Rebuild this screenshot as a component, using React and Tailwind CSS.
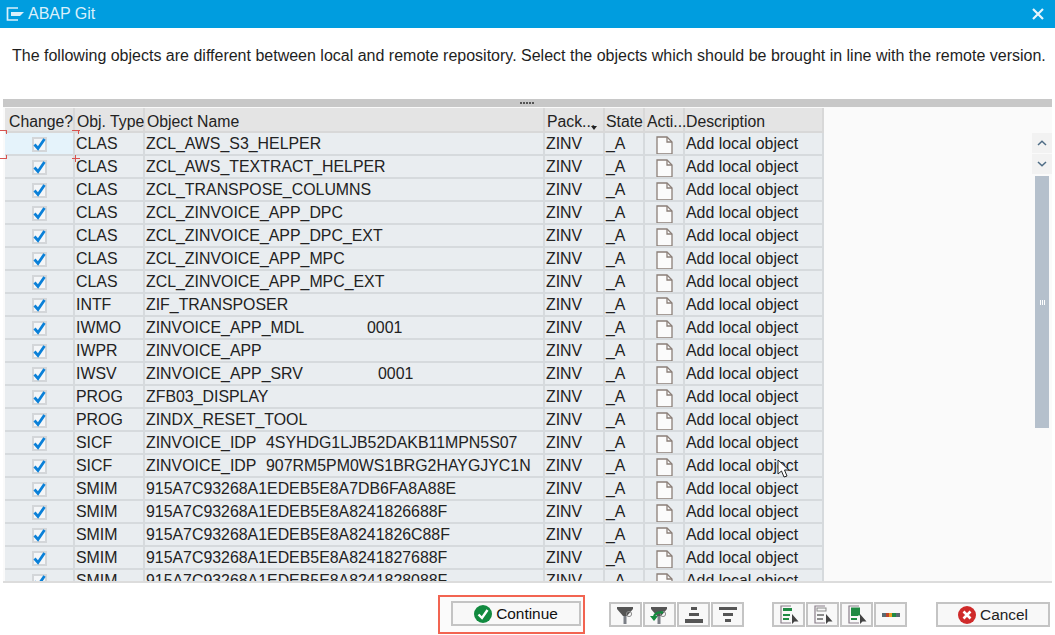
const rows = [
  ["CLAS", "ZCL_AWS_S3_HELPER"],
  ["CLAS", "ZCL_AWS_TEXTRACT_HELPER"],
  ["CLAS", "ZCL_TRANSPOSE_COLUMNS"],
  ["CLAS", "ZCL_ZINVOICE_APP_DPC"],
  ["CLAS", "ZCL_ZINVOICE_APP_DPC_EXT"],
  ["CLAS", "ZCL_ZINVOICE_APP_MPC"],
  ["CLAS", "ZCL_ZINVOICE_APP_MPC_EXT"],
  ["INTF", "ZIF_TRANSPOSER"],
  ["IWMO", "ZINVOICE_APP_MDL", "0001", "w-[221px]"],
  ["IWPR", "ZINVOICE_APP"],
  ["IWSV", "ZINVOICE_APP_SRV", "0001", "w-[232px]"],
  ["PROG", "ZFB03_DISPLAY"],
  ["PROG", "ZINDX_RESET_TOOL"],
  ["SICF", "ZINVOICE_IDP", "4SYHDG1LJB52DAKB11MPN5S07", "w-[120px]"],
  ["SICF", "ZINVOICE_IDP", "907RM5PM0WS1BRG2HAYGJYC1N", "w-[120px]"],
  ["SMIM", "915A7C93268A1EDEB5E8A7DB6FA8A88E"],
  ["SMIM", "915A7C93268A1EDEB5E8A8241826688F"],
  ["SMIM", "915A7C93268A1EDEB5E8A8241826C88F"],
  ["SMIM", "915A7C93268A1EDEB5E8A8241827688F"],
  ["SMIM", "915A7C93268A1EDEB5E8A8241828088F"],
];

const Check = () => (
  <span className="flex h-[15px] w-[15px] items-center justify-center bg-[#f4f6f8] border-2 border-[#d3d6d9]">
    <svg width="13" height="13" viewBox="0 0 13 13" className="shrink-0">
      <path d="M1.5 6.5 L5 10.5 L11.5 1" fill="none" stroke="#0a80d8" strokeWidth="2.8" />
    </svg>
  </span>
);

const Doc = () => (
  <svg width="17" height="19" viewBox="0 0 17 19">
    <path d="M1 1 H11 L16 6 V18 H1 Z" fill="#fbfbfb" stroke="#8b7f78" strokeWidth="1.3" />
    <path d="M11 1 V6 H16" fill="none" stroke="#8b7f78" strokeWidth="1.3" />
  </svg>
);

const cols = ["w-[70px]", "w-[70px]", "w-[400px]", "w-[60px]", "w-[40px]", "w-[40px]", "w-[139px]"];

const Head = ({ w, children, className = "" }) => (
  <div className={`${w} shrink-0 h-full border-r-2 border-[#d8d8d8] pt-[4px] leading-[20px] relative whitespace-nowrap ${className}`}>{children}</div>
);

const Cell = ({ w, children, className = "" }) => (
  <div className={`${w} shrink-0 border-r-2 border-[#d6dadd] pl-[1px] overflow-hidden whitespace-pre h-full ${className}`}>{children}</div>
);

const Row = ({ r, first }) => (
  <div className="flex h-[23px] shrink-0 border-b-2 border-[#d6dadd] bg-[#e9edf0] leading-[21px]">
    <div className={`w-[70px] shrink-0 border-r-2 border-[#d6dadd] flex justify-center pt-[4px] ${first ? "bg-[#e5f3fb]" : ""}`}><Check /></div>
    <Cell w="w-[70px]">{r[0]}</Cell>
    <Cell w="w-[400px]">
      {r[2] ? <span className="flex"><span className={`${r[3]} shrink-0`}>{r[1]}</span><span>{r[2]}</span></span> : r[1]}
    </Cell>
    <Cell w="w-[60px]">ZINV</Cell>
    <Cell w="w-[40px]">_A</Cell>
    <Cell w="w-[40px]" className="flex justify-center pt-[3px] pl-0"><Doc /></Cell>
    <Cell w="w-[139px]">Add local object</Cell>
  </div>
);

const Btn = ({ children, className = "" }) => (
  <button className={`flex h-[25px] items-center justify-center border-2 border-[#c4c4c4] bg-[#f8f8f8] text-[15.4px] ${className}`}>{children}</button>
);

const Funnel = () => (
  <>
    <path d="M2 2 H18 V4 L12 11 H8 L8 11 L2 4 Z" fill="#555" />
    <rect x="8.5" y="11" width="3" height="8" fill="#7b7f86" />
    <circle cx="14" cy="9" r="2.6" fill="none" stroke="#8a8a8a" strokeWidth="1" />
  </>
);

const Tool = ({ children }) => (
  <Btn className="w-[33px]">
    <svg width="22" height="20" viewBox="0 0 22 20">{children}</svg>
  </Btn>
);

const Sel = ({ color, solid }) => (
  <>
    <path d="M13 1 H3 V18 H13" fill="none" stroke="#8a7f8a" strokeWidth="1.2" />
    {solid ? (
      <rect x="5" y="2.5" width="9" height="8" fill={color} />
    ) : (
      <rect x="5" y="3" width="9" height="3" fill={color === "#8a8a8a" ? "none" : color} stroke={color === "#8a8a8a" ? color : "none"} />
    )}
    <rect x="5" y="9" width="7" height="2" fill={color} />
    <rect x="5" y="13" width="6" height="2" fill={color} />
    <path d="M14 9 L14 19 L16.5 16.5 H20.5 Z" fill="#444" />
  </>
);

const Corner = ({ className }) => <span className={`absolute bg-[#d9534f] ${className}`} />;

export default function App() {
  return (
    <div className="relative flex h-[635px] w-[1055px] flex-col overflow-hidden bg-white text-[15.9px] text-[#222] [font-family:'Liberation_Sans',Arial,sans-serif]">
      <div className="flex h-[28px] shrink-0 items-center justify-between bg-[#009ddf] pl-[6px] pr-[11px] text-[16px]">
        <div className="flex items-center gap-[3px]">
          <svg width="19" height="16" viewBox="0 0 19 16">
            <path d="M12 2 H1.5 V14 H12" fill="none" stroke="#d9f0fb" strokeWidth="1.7" />
            <path d="M5 6 H18 L14 10 H5 Z" fill="#d9f0fb" />
          </svg>
          <span className="text-[#d9f0fb]">ABAP Git</span>
        </div>
        <svg width="12" height="12" viewBox="0 0 12 12">
          <path d="M1 1 L11 11 M11 1 L1 11" stroke="#e6f5fc" strokeWidth="2.2" />
        </svg>
      </div>

      <div className="h-[71px] shrink-0 pl-[12px] pt-[18px] text-[16px] leading-[20px] whitespace-nowrap text-[#1e1e1e]">
        The following objects are different between local and remote repository. Select the objects which should be brought in line with the remote version.
      </div>

      <div className="mx-[3px] flex h-[484px] shrink-0 flex-col border-b-2 border-[#dcdcdc] bg-[#fafafa]">
        <div className="flex h-[8px] shrink-0 items-center justify-center bg-[#c8c8c8] gap-[1px] pr-[2px]">
          {[0, 1, 2, 3, 4].map((i) => <span key={i} className="h-[2px] w-[2px] bg-[#555]" />)}
        </div>
        <div className="flex min-h-0 flex-1 pl-[2px]">
          <div className="flex w-[819px] shrink-0 flex-col overflow-hidden pt-[1px]">
            <div className="flex h-[25px] shrink-0 border-b-2 border-[#d8d8d8] bg-[#e4e4e4] text-[15.8px]">
              <Head w={cols[0]} className="pl-[4px]">Change?</Head>
              <Head w={cols[1]} className="pl-[2px]">Obj. Type</Head>
              <Head w={cols[2]} className="pl-[2px]">Object Name</Head>
              <Head w={cols[3]} className="pl-[2px]">
                Pack...
                <span className="absolute left-[46px] top-[18px] h-0 w-0 border-x-[3px] border-t-[4px] border-x-transparent border-t-[#222]" />
              </Head>
              <Head w={cols[4]} className="pl-[1px]">State</Head>
              <Head w={cols[5]} className="pl-[2px]">Acti...</Head>
              <Head w={cols[6]} className="border-r-0 pl-[1px]">Description</Head>
            </div>
            {rows.map((r, i) => <Row key={i} r={r} first={i === 0} />)}
          </div>
          <div className="flex-1 relative">
            <div className="absolute left-[207px] top-[26px] flex w-[22px] flex-col items-center gap-[1px]">
              <div className="flex h-[20px] w-[20px] items-center justify-center bg-[#f2f2f2]">
                <svg width="10" height="6" viewBox="0 0 10 6"><path d="M1 5 L5 1.2 L9 5" fill="none" stroke="#4f6d86" strokeWidth="1.5" /></svg>
              </div>
              <div className="flex h-[20px] w-[20px] items-center justify-center bg-[#f2f2f2]">
                <svg width="10" height="6" viewBox="0 0 10 6"><path d="M1 1 L5 4.8 L9 1" fill="none" stroke="#4f6d86" strokeWidth="1.5" /></svg>
              </div>
              <div className="mt-[1px] flex h-[252px] w-[14px] items-center justify-center bg-[#b5c0cc]">
                <div className="flex gap-[1px]">
                  <span className="h-[5px] w-[1px] bg-white" />
                  <span className="h-[5px] w-[1px] bg-white" />
                  <span className="h-[5px] w-[1px] bg-white" />
                </div>
              </div>
            </div>
          </div>
        </div>
      </div>

      <div className="flex min-h-0 flex-1 items-start pt-[19px] pl-[438px]">
        <div className="-mt-[7px] flex h-[39px] w-[147px] shrink-0 items-start justify-end border-2 border-[#f26451] bg-[#fbfbfb] pt-[4px] pr-[2px]">
          <Btn className="w-[130px] gap-[4px]">
            <svg width="18" height="18" viewBox="0 0 18 18"><circle cx="9" cy="9" r="9" fill="#118a3f" /><path d="M4.5 9.5 L8 13 L13.5 5" fill="none" stroke="#fff" strokeWidth="2.4" /></svg>
            <span className="text-[#111]">Continue</span>
          </Btn>
        </div>
        <div className="ml-[24px] flex gap-[1px]">
          <Tool><Funnel /></Tool>
          <Tool>
            <Funnel />
            <path d="M14 7.5 Q6 6.5 5 12" fill="none" stroke="#138a3e" strokeWidth="2.4" />
            <path d="M1 11 H9 L5 16 Z" fill="#138a3e" />
          </Tool>
          <Tool>
            <rect x="8" y="2" width="6" height="3" fill="#555" />
            <rect x="6" y="8" width="10" height="3" fill="#555" />
            <rect x="2" y="14" width="18" height="4" fill="#555" />
          </Tool>
          <Tool>
            <rect x="2" y="2" width="18" height="3" fill="#555" />
            <rect x="6" y="8" width="10" height="3" fill="#555" />
            <rect x="8" y="14" width="6" height="3" fill="#555" />
          </Tool>
        </div>
        <div className="ml-[28px] flex gap-[1px]">
          <Tool><Sel color="#1f8a43" /></Tool>
          <Tool><Sel color="#8a8a8a" /></Tool>
          <Tool><Sel color="#1f8a43" solid /></Tool>
          <Tool>
            <rect x="2" y="8" width="5" height="4" fill="#5a6a70" />
            <rect x="6" y="8" width="3" height="4" fill="#c0452b" />
            <rect x="9" y="8" width="3" height="4" fill="#e8a020" />
            <rect x="12" y="8" width="4" height="4" fill="#1f8a43" />
            <rect x="16" y="8" width="4" height="4" fill="#5a6a70" />
          </Tool>
        </div>
        <Btn className="ml-[29px] w-[114px] gap-[4px]">
          <svg width="18" height="18" viewBox="0 0 18 18"><circle cx="9" cy="9" r="9" fill="#cf2a2a" /><path d="M5.5 5.5 L12.5 12.5 M12.5 5.5 L5.5 12.5" stroke="#fff" strokeWidth="2.6" /></svg>
          <span>Cancel</span>
        </Btn>
      </div>

      <div className="pointer-events-none absolute left-0 top-[130px] h-[29px] w-[80px]">
        <Corner className="left-0 top-0 h-[1px] w-[6px]" />
        <Corner className="left-[6px] top-0 h-[4px] w-[1px]" />
        <Corner className="left-0 bottom-0 h-[1px] w-[6px]" />
        <Corner className="left-[6px] bottom-0 h-[4px] w-[1px]" />
        <Corner className="right-0 top-0 h-[1px] w-[8px]" />
        <Corner className="right-[1px] top-0 h-[4px] w-[1px]" />
        <Corner className="right-0 bottom-0 h-[1px] w-[8px]" />
        <Corner className="right-[4px] -bottom-[3px] h-[7px] w-[1px]" />
      </div>

      <svg width="16" height="20" viewBox="0 0 16 20" className="absolute left-[777px] top-[459px]">
        <path d="M1 1 V15 L4.5 12 L7 18 L10 17 L7.5 11 L12 11 Z" fill="#fff" stroke="#222" strokeWidth="1" />
      </svg>
    </div>
  );
}
